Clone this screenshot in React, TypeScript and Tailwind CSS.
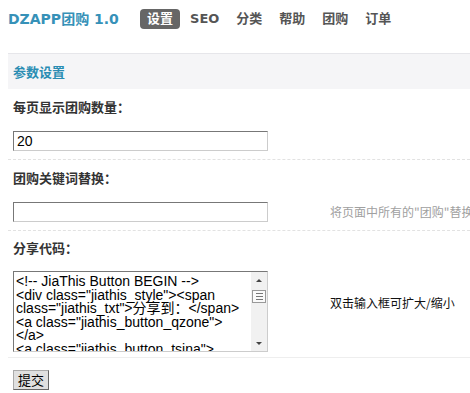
import React, { useState } from 'react';

const tabs = ['设置', 'SEO', '分类', '帮助', '团购', '订单'];

const shareCode = [
  '<!-- JiaThis Button BEGIN -->',
  '<div class="jiathis_style"><span',
  'class="jiathis_txt">分享到：</span>',
  '<a class="jiathis_button_qzone">',
  '</a>',
  '<a class="jiathis_button_tsina">',
  '</a>',
  '<a class="jiathis_button_tqq"></a>',
].join('\n');

const cjk = "font-['Noto_Sans_CJK_SC',sans-serif]";

const App: React.FC = () => {
  const [perPage, setPerPage] = useState('20');
  const [keyword, setKeyword] = useState('');
  const [code, setCode] = useState(shareCode);

  return (
    <div className={`min-h-[393px] w-[470px] overflow-hidden bg-white ${cjk}`}>
      {/* top nav */}
      <div className="flex h-[29px] items-end pl-2">
        <div className="flex h-[20px] w-[132px] items-center font-['DejaVu_Sans','Noto_Sans_CJK_SC',sans-serif] text-[14px] font-bold text-[#3691b8]">
          DZAPP团购 1.0
        </div>
        <div className="flex gap-[3px]">
          {tabs.map((t, i) => (
            <span
              key={t}
              className={
                'h-[20px] rounded-[4px] px-[7px] font-["DejaVu_Sans","Noto_Sans_CJK_SC",sans-serif] text-[13px] leading-[20px] font-bold ' +
                (i === 0 ? 'bg-[#666666] text-white' : 'text-[#555555]')
              }
            >
              {t}
            </span>
          ))}
        </div>
      </div>

      <div className="ml-2 mt-[24px]">
        {/* section header */}
        <div className="flex h-[36px] items-center border-t border-[#e6e6ea] bg-[#f5f5f7] pl-[5px] text-[13px] font-bold text-[#2a8db3]">
          参数设置
        </div>

        {/* per page */}
        <div className="border-b border-dashed border-[#e2e2e2] pb-[8px] pl-[5px] pt-[9px]">
          <div className="text-[13px] leading-[18px] font-bold text-[#333333]">每页显示团购数量：</div>
          <input
            value={perPage}
            onChange={(e) => setPerPage(e.target.value)}
            className="mt-[15px] block h-[20px] w-[255px] border border-[#cccccc] border-l-[#777777] border-t-[#777777] pl-[3px] font-['Liberation_Sans',sans-serif] text-[14px] text-black outline-none"
          />
        </div>

        {/* keyword */}
        <div className="border-b border-dashed border-[#e2e2e2] pb-[8px] pl-[5px] pt-[9px]">
          <div className="text-[13px] leading-[18px] font-bold text-[#333333]">团购关键词替换：</div>
          <div className="mt-[15px] flex items-center">
            <div className="w-[317px] shrink-0">
              <input
                value={keyword}
                onChange={(e) => setKeyword(e.target.value)}
                className="block h-[20px] w-[255px] border border-[#cccccc] border-l-[#777777] border-t-[#777777] pl-[3px] font-['Liberation_Sans',sans-serif] text-[14px] outline-none"
              />
            </div>
            <span className="whitespace-nowrap text-[12px] text-[#a0a0a0]">将页面中所有的"团购"替换</span>
          </div>
        </div>

        {/* share code */}
        <div className="border-b border-[#eeeeee] pb-[5px] pl-[5px] pt-[8px]">
          <div className="text-[13px] leading-[18px] font-bold text-[#333333]">分享代码：</div>
          <div className="mt-[14px] flex items-start">
            <div className="w-[317px] shrink-0">
              <div className="flex h-[81px] w-[255px] border border-[#cccccc] border-l-[#777777] border-t-[#777777]">
                <textarea
                  value={code}
                  onChange={(e) => setCode(e.target.value)}
                  className="h-full flex-1 resize-none overflow-hidden whitespace-pre pl-[2px] pt-[3px] font-['Liberation_Sans','Noto_Sans_CJK_SC',sans-serif] text-[14px] leading-[13.6px] text-black outline-none"
                />
                {/* scrollbar */}
                <div className="flex w-[16px] flex-col bg-[#f1f1f1]">
                  <div className="flex h-[16px] items-center justify-center">
                    <div className="h-0 w-0 border-x-[3px] border-b-[3px] border-x-transparent border-b-[#444444]" />
                  </div>
                  <div className="mx-[1px] mt-[2px] flex h-[13px] flex-col items-center justify-center gap-[2px] border border-[#999999] bg-[#fafafa]">
                    <div className="h-[1px] w-[7px] bg-[#777777]" />
                    <div className="h-[1px] w-[7px] bg-[#777777]" />
                    <div className="h-[1px] w-[7px] bg-[#777777]" />
                  </div>
                  <div className="flex-1" />
                  <div className="flex h-[16px] items-center justify-center">
                    <div className="h-0 w-0 border-x-[3px] border-t-[3px] border-x-transparent border-t-[#444444]" />
                  </div>
                </div>
              </div>
            </div>
            <span className="mt-[23px] whitespace-nowrap text-[12px] leading-[18px] text-[#111111]">双击输入框可扩大/缩小</span>
          </div>
        </div>

        {/* submit */}
        <div className="pl-[5px] pt-[8px]">
          <button className="h-[20px] border border-[#aaaaaa] border-b-[#666666] border-r-[#666666] bg-[#e0e0e0] px-[4px] text-[13px] leading-[16px] text-black">
            提交
          </button>
        </div>
      </div>
    </div>
  );
};

export default App;
